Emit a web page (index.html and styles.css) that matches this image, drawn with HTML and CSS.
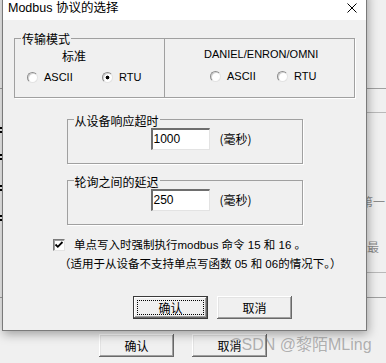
FILE: index.html
```html
<!DOCTYPE html>
<html lang="zh">
<head>
<meta charset="utf-8">
<title>Modbus 协议的选择</title>
<link rel="stylesheet" href="styles.css">
</head>
<body>
<div class="screen">
  <div class="backwin">
    <div class="rule rule-full rule-1"></div>
    <div class="rule rule-right rule-2"></div>
    <div class="back-text back-text-1">第一</div>
    <div class="back-text back-text-2">最</div>
    <div class="rule rule-right rule-3"></div>
    <div class="rule rule-full rule-4"></div>
    <div class="back-buttons">
      <button class="btn">确认</button>
      <button class="btn">取消</button>
    </div>
  </div>
  <div class="left-marks">
    <span class="mark m1"></span>
    <span class="mark m2"></span>
    <span class="mark m3"></span>
    <span class="mark m4"></span>
  </div>

  <div class="dialog">
    <div class="titlebar">
      <span class="title">Modbus 协议的选择</span>
      <svg class="close" width="10" height="10" viewBox="0 0 10 10"><path d="M0.5 0.5 L9.5 9.5 M9.5 0.5 L0.5 9.5" stroke="#000" stroke-width="1" fill="none"/></svg>
    </div>
    <div class="dialog-body">
      <div class="group group-mode">
        <span class="group-label">传输模式</span>
        <div class="mode-col mode-std">
          <div class="mode-head">标准</div>
          <div class="radio-row">
            <span class="radio-item"><span class="radio"></span>ASCII</span>
            <span class="radio-item"><span class="radio checked"></span>RTU</span>
          </div>
        </div>
        <div class="mode-col mode-daniel">
          <div class="mode-head">DANIEL/ENRON/OMNI</div>
          <div class="radio-row">
            <span class="radio-item"><span class="radio"></span>ASCII</span>
            <span class="radio-item"><span class="radio"></span>RTU</span>
          </div>
        </div>
      </div>

      <div class="group group-field">
        <span class="group-label">从设备响应超时</span>
        <div class="textbox">1000</div>
        <span class="unit">(毫秒)</span>
      </div>

      <div class="group group-field group-delay">
        <span class="group-label">轮询之间的延迟</span>
        <div class="textbox">250</div>
        <span class="unit">(毫秒)</span>
      </div>

      <div class="check-row">
        <span class="checkbox"><svg width="10" height="10" viewBox="0 0 10 10"><polyline points="1.5,4.5 3.8,6.8 8.5,2" stroke="#000" stroke-width="1.8" fill="none"/></svg></span>
        <span>单点写入时强制执行modbus 命令 15 和 16 。</span>
      </div>
      <div class="note">（适用于从设备不支持单点写函数 05 和 06的情况下。）</div>

      <div class="dialog-buttons">
        <button class="btn btn-default">确认</button>
        <button class="btn">取消</button>
      </div>
    </div>
  </div>

  <div class="watermark">CSDN @黎陌MLing</div>
</div>
</body>
</html>
```

FILE: styles.css
```css
html, body {
  margin: 0;
  padding: 0;
}
body {
  background: #f0f0f0;
  font-family: "Liberation Sans", "Noto Sans CJK SC", sans-serif;
  font-size: 12px;
  color: #000;
}
.screen {
  position: relative;
  width: 386px;
  height: 363px;
  overflow: hidden;
  background: #f0f0f0;
}

/* background window */
.backwin {
  display: flex;
  flex-direction: column;
}
.rule {
  height: 1px;
  background: #a0a0a0;
}
.rule-1 { margin-top: 88px; }
.rule-2 { margin-top: 23px; margin-left: 300px; background: #b9b9b9; }
.back-text {
  color: #8c8c8c;
  font-size: 12px;
  line-height: 14px;
  font-family: "Noto Sans CJK SC", sans-serif;
}
.back-text-1 { margin-top: 82px; padding-left: 361px; }
.back-text-2 { margin-top: 31px; padding-left: 367px; }
.rule-3 { margin-top: 18px; margin-left: 300px; background: #b9b9b9; }
.rule-4 { margin-top: 24px; }
.back-buttons {
  margin-top: 36px;
  padding-left: 99px;
  display: flex;
  gap: 18px;
}

.left-marks {
  position: absolute;
  left: 0;
  top: 127px;
  display: flex;
  flex-direction: column;
}
.mark {
  display: block;
  width: 2px;
  height: 2px;
  background: #000;
  box-shadow: 0 4px 0 #000;
}
.m2 { margin-top: 25px; }
.m3 { margin-top: 29px; }
.m4 { margin-top: 28px; }

/* buttons */
.btn {
  width: 75px;
  height: 23px;
  padding: 0;
  margin: 0;
  border: none;
  background: #f0f0f0;
  font-family: "Noto Sans CJK SC", sans-serif;
  font-size: 12px;
  color: #000;
  box-shadow: inset -1px -1px 0 #696969, inset 1px 1px 0 #fff, inset -2px -2px 0 #a0a0a0, inset 2px 2px 0 #e3e3e3;
}
.btn-default {
  box-shadow: inset 0 0 0 1px #3a3a3a, inset -2px -2px 0 #696969, inset 2px 2px 0 #fff, inset -3px -3px 0 #a0a0a0;
  outline: 1px dotted #000;
  outline-offset: -5px;
}

/* dialog */
.dialog {
  position: absolute;
  left: 2px;
  top: -10px;
  width: 365px;
  height: 341px;
  box-sizing: border-box;
  border: 1px solid #7a7a7a;
  background: #f0f0f0;
  box-shadow: 1px 3px 10px rgba(0, 0, 0, 0.35);
  display: flex;
  flex-direction: column;
}
.titlebar {
  height: 29px;
  box-sizing: border-box;
  background: #fff;
  padding: 4px 9px 0 5px;
  display: flex;
  align-items: center;
  justify-content: space-between;
}
.title {
  font-size: 12.5px;
  line-height: 16px;
  color: #000;
}
.close {
  display: block;
}
.dialog-body {
  padding: 18px 11px 0;
}

.group {
  position: relative;
  border: 1px solid #a0a0a0;
  box-shadow: 1px 1px 0 #fff;
  box-sizing: border-box;
}
.group-label {
  position: absolute;
  left: 6px;
  top: -6px;
  padding: 0 1px;
  background: #f0f0f0;
  line-height: 14px;
  font-size: 12px;
  font-family: "Noto Sans CJK SC", sans-serif;
}
.group-mode .group-label { top: -7px; }

.group-mode {
  height: 60px;
  display: grid;
  grid-template-columns: 149px 1fr;
}
.mode-daniel {
  border-left: 1px solid #a0a0a0;
}
.mode-std { padding-top: 9px; }
.mode-daniel { padding-top: 7px; }
.mode-head {
  line-height: 16px;
}
.mode-std .mode-head {
  padding-left: 47px;
  font-family: "Noto Sans CJK SC", sans-serif;
  font-size: 12px;
}
.mode-daniel .mode-head {
  padding-left: 39px;
  font-size: 11px;
}
.radio-row {
  display: flex;
  line-height: 16px;
  font-size: 11px;
}
.mode-std .radio-row { margin-top: 5px; padding-left: 12px; }
.mode-daniel .radio-row { margin-top: 6px; padding-left: 45px; }
.radio-item {
  display: inline-flex;
  align-items: center;
  gap: 6px;
}
.mode-std .radio-item:first-child { width: 75px; }
.mode-daniel .radio-item:first-child { width: 67px; }
.radio {
  display: block;
  width: 11px;
  height: 11px;
  box-sizing: border-box;
  border-radius: 50%;
  border: 1px solid;
  border-color: #8c8c8c #e3e3e3 #e3e3e3 #8c8c8c;
  background: #fff;
  box-shadow: inset 1px 1px 0 #d4d4d4;
}
.radio.checked {
  background: radial-gradient(circle, #000 0, #000 1.6px, #fff 2.2px);
}

.group-field {
  width: 236px;
  height: 45px;
  margin: 21px auto 0;
  padding: 8px 0 0 83px;
  display: flex;
  align-items: flex-start;
}
.group-delay {
  margin-top: 16px;
}
.textbox {
  width: 59px;
  height: 22px;
  box-sizing: border-box;
  background: #fff;
  border-top: 2px solid #6e6e6e;
  border-left: 2px solid #6e6e6e;
  border-right: 1px solid #e3e3e3;
  border-bottom: 1px solid #e3e3e3;
  padding: 1px 0 0 1px;
  font-size: 12px;
  line-height: 16px;
}
.unit {
  margin-left: 10px;
  line-height: 22px;
  font-size: 12px;
  font-family: "Noto Sans CJK SC", sans-serif;
}

.check-row {
  margin-top: 12px;
  padding-left: 39px;
  display: flex;
  align-items: center;
  font-size: 11.5px;
  line-height: 16px;
}
.checkbox {
  width: 12px;
  height: 12px;
  box-sizing: border-box;
  margin-right: 9px;
  background: #fff;
  border: 1px solid;
  border-color: #7a7a7a #e3e3e3 #e3e3e3 #7a7a7a;
  box-shadow: inset 1px 1px 0 #a0a0a0;
  display: flex;
  align-items: center;
  justify-content: center;
}
.checkbox svg { display: block; }
.note {
  margin-top: 3px;
  padding-left: 45px;
  font-size: 11.5px;
  line-height: 16px;
}
.dialog-buttons {
  margin-top: 24px;
  padding-left: 119px;
  display: flex;
  gap: 9px;
}

.watermark {
  position: absolute;
  left: 230px;
  top: 336px;
  font-size: 16px;
  line-height: 18px;
  color: rgba(120, 120, 120, 0.55);
  font-family: "Liberation Sans", "Noto Sans CJK SC", sans-serif;
  white-space: nowrap;
}
```
